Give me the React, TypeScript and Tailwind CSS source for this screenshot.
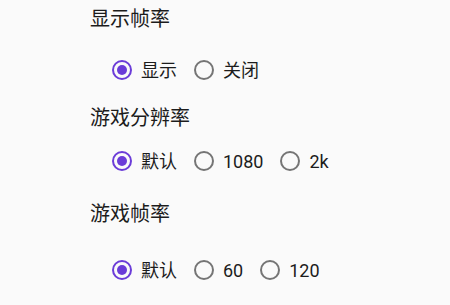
const Radio = ({ label, checked }: { label: string; checked?: boolean }) => (
  <div className="flex items-center gap-[9px]">
    <span
      className={
        checked
          ? "w-[20px] h-[20px] rounded-full border-2 border-[#6b3cd8] flex items-center justify-center"
          : "w-[20px] h-[20px] rounded-full border-2 border-[#757575]"
      }
    >
      {checked && <span className="w-[10px] h-[10px] rounded-full bg-[#6b3cd8]" />}
    </span>
    <span className="text-[18px] text-[#1c1c1c]">{label}</span>
  </div>
);

const Group = ({ options, checked }: { options: string[]; checked: number }) => (
  <div className="flex items-center gap-[17px] h-[40px] ml-[22px]">
    {options.map((o, i) => (
      <Radio key={o} label={o} checked={i === checked} />
    ))}
  </div>
);

const Title = ({ children }: { children: string }) => (
  <div className="h-[30px] flex items-center text-[20px] text-[#1c1c1c]">{children}</div>
);

export default function App() {
  return (
    <div
      className="w-[450px] h-[305px] bg-[#fafafa] overflow-hidden"
      style={{ fontFamily: 'Roboto, "Noto Sans CJK SC", sans-serif' }}
    >
      <div className="flex flex-col pl-[90px] pt-[4px]">
        <Title>显示帧率</Title>
        <div className="mt-[16px]">
          <Group options={["显示", "关闭"]} checked={0} />
        </div>
        <div className="mt-[13px]">
          <Title>游戏分辨率</Title>
        </div>
        <div className="mt-[8px]">
          <Group options={["默认", "1080", "2k"]} checked={0} />
        </div>
        <div className="mt-[18px]">
          <Title>游戏帧率</Title>
        </div>
        <div className="mt-[21px]">
          <Group options={["默认", "60", "120"]} checked={0} />
        </div>
      </div>
    </div>
  );
}
